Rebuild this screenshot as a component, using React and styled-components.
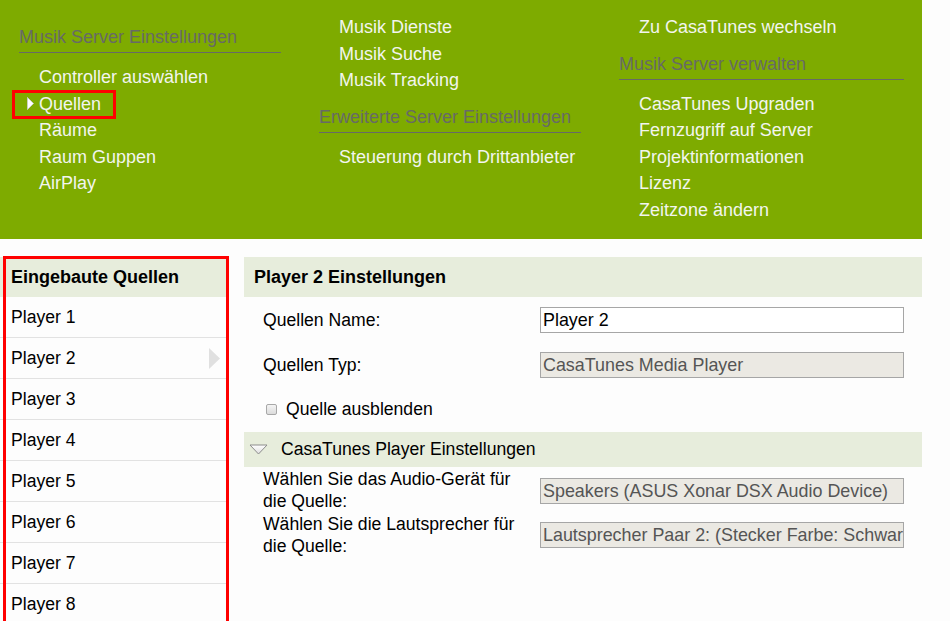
import React from 'react';
import styled, { createGlobalStyle } from 'styled-components';

const colors = {
  green: '#7eab00',
  navText: '#f2f5ee',
  navTitle: '#676a66',
  panelHead: '#e7eddc',
  rowLine: '#e2e2e2',
  fieldBorder: '#a6a6a6',
  disabledBg: '#ebe9e3',
  disabledText: '#555',
  red: '#ff0000',
};

const GlobalStyle = createGlobalStyle`
  html, body {
    margin: 0;
    padding: 0;
    background: #fdfdfd;
    font-family: "Liberation Sans", Arial, sans-serif;
  }
`;

const Page = styled.div`
  width: 922px;
  overflow: hidden;
`;

const TopNav = styled.nav`
  height: 239px;
  box-sizing: border-box;
  background: ${colors.green};
  padding: 14px 0 0 19px;
  display: flex;
  gap: 38px;
  align-items: flex-start;
`;

const NavColumn = styled.div`
  width: ${({ $width }) => $width}px;
  display: flex;
  flex-direction: column;
`;

const NavTitle = styled.div`
  margin-top: 10px;
  margin-bottom: 11px;
  padding-bottom: 2px;
  border-bottom: 1px solid ${colors.navTitle};
  color: ${colors.navTitle};
  font-size: 18px;
  line-height: 26px;
  white-space: nowrap;
`;

const NavItem = styled.div`
  position: relative;
  padding-left: 20px;
  color: ${colors.navText};
  font-size: 18px;
  line-height: 26.5px;
  white-space: nowrap;

  ${({ $active }) =>
    $active &&
    `
    &::after {
      content: '';
      position: absolute;
      left: -7px;
      top: -1px;
      width: 98px;
      height: 23px;
      border: 3px solid ${colors.red};
    }
  `}
`;

const NavArrow = styled.svg`
  position: absolute;
  left: 8px;
  top: 6px;
`;

const Body = styled.div`
  display: flex;
  gap: 15px;
  margin-top: 18px;
  align-items: flex-start;
`;

const SourceList = styled.div`
  position: relative;
  width: 229px;
  flex-shrink: 0;

  &::after {
    content: '';
    position: absolute;
    left: 3px;
    right: 0;
    top: -1px;
    bottom: -40px;
    border: 3px solid ${colors.red};
    pointer-events: none;
  }
`;

const PanelHead = styled.div`
  display: flex;
  align-items: center;
  gap: 13px;
  padding-left: ${({ $indent }) => $indent}px;
  background: ${colors.panelHead};
  color: #000;
  font-size: ${({ $bold }) => ($bold ? '18px' : '17.6px')};
  font-weight: ${({ $bold }) => ($bold ? 700 : 400)};
  height: ${({ $h }) => $h || 40}px;
`;

const SourceRow = styled.div`
  position: relative;
  height: 40px;
  display: flex;
  align-items: center;
  padding-left: 11px;
  border-bottom: 1px solid ${colors.rowLine};
  font-size: 17.6px;
  color: #000;
`;

const RowChevron = styled.svg`
  position: absolute;
  right: 9px;
  top: 10px;
`;

const Settings = styled.div`
  flex: 1;
`;

const FormRow = styled.div`
  display: grid;
  grid-template-columns: 277px 364px;
  align-items: ${({ $top }) => ($top ? 'start' : 'center')};
  padding: ${({ $top }) => ($top ? '1px 0 0 19px' : '10px 0 9px 19px')};
  min-height: ${({ $top }) => ($top ? 44 : 26)}px;
`;

const Label = styled.div`
  font-size: 17.6px;
  line-height: ${({ $tight }) => ($tight ? '22px' : '26px')};
  color: #000;
  max-width: 262px;
`;

const Field = styled.div`
  height: 26px;
  box-sizing: border-box;
  margin-top: ${({ $offset }) => $offset || 0}px;
  padding: 0 2px;
  display: flex;
  align-items: center;
  border: 1px solid ${colors.fieldBorder};
  background: ${({ $disabled }) => ($disabled ? colors.disabledBg : '#fff')};
  color: ${({ $disabled }) => ($disabled ? colors.disabledText : '#000')};
  font-size: 17.9px;
  white-space: nowrap;
  overflow: hidden;
`;

const CheckRow = styled.label`
  height: 45px;
  display: flex;
  align-items: center;
  gap: 9px;
  padding-left: 22px;
  font-size: 17.6px;
  color: #000;
`;

const Check = styled.span`
  width: 9px;
  height: 9px;
  border: 1px solid #a8a8a8;
  border-radius: 2px;
  background: linear-gradient(#f4f4f4, #dcdcdc);
`;

const DownTriangle = () => (
  <svg width="19" height="11" viewBox="0 0 19 11">
    <defs>
      <linearGradient id="tri" x1="0" y1="0" x2="0" y2="1">
        <stop offset="0" stopColor="#ffffff" />
        <stop offset="1" stopColor="#dedede" />
      </linearGradient>
    </defs>
    <polygon points="1,1 18,1 9.5,10" fill="url(#tri)" stroke="#8c8c8c" strokeWidth="1" />
  </svg>
);

const players = ['Player 1', 'Player 2', 'Player 3', 'Player 4', 'Player 5', 'Player 6', 'Player 7', 'Player 8'];

const App = () => (
  <Page>
    <GlobalStyle />
    <TopNav>
      <NavColumn $width={262}>
        <NavTitle>Musik Server Einstellungen</NavTitle>
        <NavItem>Controller auswählen</NavItem>
        <NavItem $active>
          <NavArrow width="7" height="13" viewBox="0 0 7 13">
            <polygon points="0.5,0.5 6.5,6.5 0.5,12.5" fill="#ffffff" stroke="#c9cfc0" strokeWidth="1" />
          </NavArrow>
          Quellen
        </NavItem>
        <NavItem>Räume</NavItem>
        <NavItem>Raum Guppen</NavItem>
        <NavItem>AirPlay</NavItem>
      </NavColumn>
      <NavColumn $width={262}>
        <NavItem>Musik Dienste</NavItem>
        <NavItem>Musik Suche</NavItem>
        <NavItem>Musik Tracking</NavItem>
        <NavTitle>Erweiterte Server Einstellungen</NavTitle>
        <NavItem>Steuerung durch Drittanbieter</NavItem>
      </NavColumn>
      <NavColumn $width={285}>
        <NavItem>Zu CasaTunes wechseln</NavItem>
        <NavTitle>Musik Server verwalten</NavTitle>
        <NavItem>CasaTunes Upgraden</NavItem>
        <NavItem>Fernzugriff auf Server</NavItem>
        <NavItem>Projektinformationen</NavItem>
        <NavItem>Lizenz</NavItem>
        <NavItem>Zeitzone ändern</NavItem>
      </NavColumn>
    </TopNav>

    <Body>
      <SourceList>
        <PanelHead $bold $indent={11}>Eingebaute Quellen</PanelHead>
        {players.map((p) => (
          <SourceRow key={p}>
            {p}
            {p === 'Player 2' && (
              <RowChevron width="11" height="21" viewBox="0 0 11 21">
                <polygon points="0,0 11,10.5 0,21" fill="#e0e0e0" />
              </RowChevron>
            )}
          </SourceRow>
        ))}
      </SourceList>

      <Settings>
        <PanelHead $bold $indent={10}>Player 2 Einstellungen</PanelHead>
        <FormRow>
          <Label>Quellen Name:</Label>
          <Field>Player 2</Field>
        </FormRow>
        <FormRow>
          <Label>Quellen Typ:</Label>
          <Field $disabled>CasaTunes Media Player</Field>
        </FormRow>
        <CheckRow>
          <Check />
          Quelle ausblenden
        </CheckRow>
        <PanelHead $indent={5} $h={35}>
          <DownTriangle />
          CasaTunes Player Einstellungen
        </PanelHead>
        <FormRow $top>
          <Label $tight>Wählen Sie das Audio-Gerät für die Quelle:</Label>
          <Field $disabled $offset={10}>Speakers (ASUS Xonar DSX Audio Device)</Field>
        </FormRow>
        <FormRow $top>
          <Label $tight>Wählen Sie die Lautsprecher für die Quelle:</Label>
          <Field $disabled $offset={9}>Lautsprecher Paar 2: (Stecker Farbe: Schwarz)</Field>
        </FormRow>
      </Settings>
    </Body>
  </Page>
);

export default App;
